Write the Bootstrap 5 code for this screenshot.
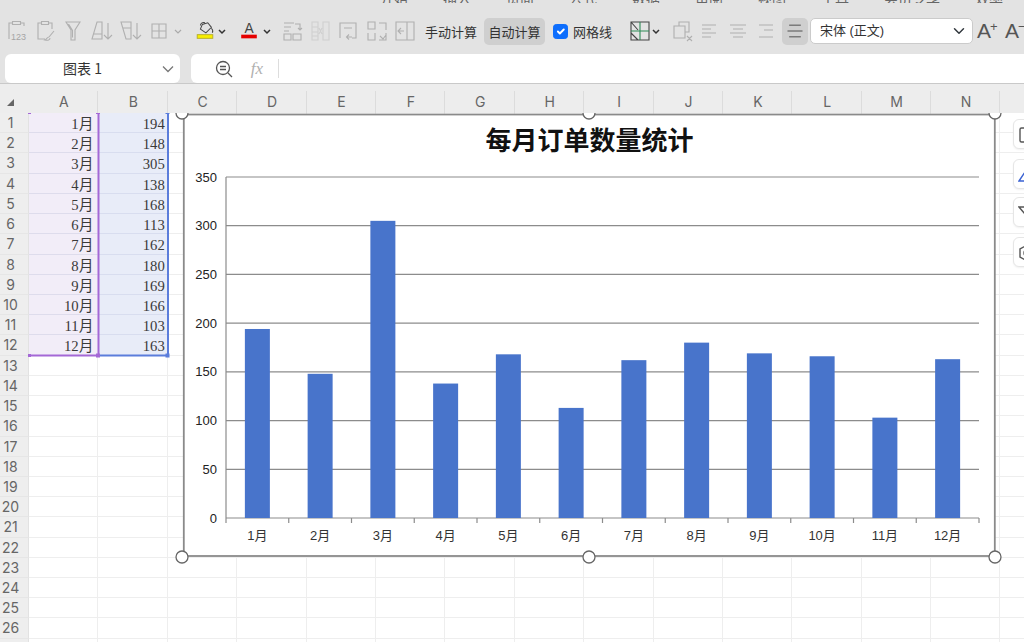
<!DOCTYPE html>
<html lang="zh">
<head>
<meta charset="utf-8">
<title>每月订单数量统计</title>
<link href="https://cdn.jsdelivr.net/npm/bootstrap@5.3.0/dist/css/bootstrap.min.css" rel="stylesheet">
<style>
html,body{height:100%;margin:0;overflow:hidden;background:#fff}
body{font-family:"Noto Sans CJK SC","Liberation Sans",sans-serif;font-size:13px;color:#333}
.app{width:1024px;height:642px;overflow:hidden;background:#e3e3e3}
.tabs-cut{height:3px;overflow:hidden;padding-left:380px;gap:35px;align-items:flex-end;font-size:14px;line-height:16px;color:#666;white-space:nowrap}
.tabs-cut span{flex:none;margin-bottom:-3px}
.tools{height:51px;padding:13px 0 8px 2px;flex-wrap:nowrap;overflow:hidden}
.tools>*{flex:none}
.ico{width:28.6px;height:30px;display:flex;align-items:center;justify-content:center}
.ico2{width:28.2px}.ico3{width:28px}
.ico svg{fill:none;stroke:#b0b0b0;stroke-width:1.1;width:24px;height:24px}
.ico .pale{stroke:#d0d0d0}
.ico-dark svg{stroke:#454545}
.w22{width:22px}.w24{width:24px}.w26{width:26px}
.caret{width:8px;height:30px}
.caret svg{width:8px;height:30px;fill:none;stroke:#333;stroke-width:1.5}
.caret.off svg{stroke:#aaa;stroke-width:1.2}
.m2{margin-left:2px}.m3{margin-left:3px}.m4{margin-left:4px}.m5{margin-left:5px}.m6{margin-left:6px}.m7{margin-left:7px}.m8{margin-left:8px}.m12{margin-left:12px}.m16{margin-left:16px}
.m12x{margin-left:12.4px}
.press{background:#cfcfcf;border-radius:5px}
.ico.press{height:27px}
.ico.press svg{width:20px;height:20px}
.cmd{line-height:27px;height:27px;font-size:13px;color:#333;white-space:nowrap}
.cmd-on{width:61px;text-align:center}
.grid-check{width:15px;height:15px;margin-top:0;margin-bottom:0;border-radius:4px;background-color:#1a6ef5;border-color:#1a6ef5;opacity:1}
.font-pick{width:163px;height:26px;min-height:26px;padding:0 24px 0 9px;font-size:13px;line-height:24px;border-radius:5px;border-color:#cbcbcb;color:#333;font-family:"Liberation Sans","Noto Sans CJK SC",sans-serif;background-position:right 5px center}
.grow-a{width:24px;font-family:"Liberation Sans",sans-serif;font-size:21px;font-weight:300;color:#555;line-height:30px;position:relative}
.grow-a sup{font-size:13px;top:-.55em;margin-left:-1px;vertical-align:baseline;position:relative}
.fbar{height:29px;padding-left:5px}
.name-box{width:175px;background:#fff;border-radius:6px;font-size:14px;color:#333;position:relative}
.name-text{width:155px;text-align:center}
.name-box svg{width:12px;height:8px;fill:none;stroke:#777;stroke-width:1.3;margin-left:2px}
.formula{margin-left:11px;flex:1;background:#fff;border-radius:6px 0 0 6px}
.formula svg{fill:none;stroke:#555;stroke-width:1.3}
.zoomer{margin-left:24px;width:18px;height:18px}
.fx{margin-left:12px;width:24px;font-family:"Liberation Serif",serif;font-style:italic;font-size:17px;color:#b0b0b0;text-align:center}
.fx-sep{width:1px;height:19px;background:#ddd;margin-left:9px}
.head-row{height:30px;border-top:1px solid #c9c9c9;background:#ededed;padding-top:7px;flex-wrap:nowrap;overflow:hidden;position:relative;z-index:3}
.corner{width:29px;flex:none}
.corner svg{width:7px;height:7px;fill:#666;margin:8px 0 0 7px;display:block}
.col-h{flex:none;width:69.4px;padding-left:1.5px;text-align:center;font-family:Inter,"Liberation Sans",sans-serif;font-size:14px;line-height:22px;color:#666;border-right:1px solid #dcdcdc}
.sheet{height:529px;overflow:hidden;position:relative;background:#fff}
.srow{display:flex;height:20.23px;flex-wrap:nowrap}
.rnum{flex:none;width:29px;padding-right:7px;background:#eeeeee;border-right:1px solid #e2e2e2;border-bottom:1px solid #e6e6e6;text-align:center;font-family:Inter,"Liberation Sans",sans-serif;font-size:14px;line-height:19px;color:#666}
.cellx{flex:none;width:69.4px;border-right:1.5px solid #eeeeee;border-bottom:1.5px solid #eeeeee;text-align:right;padding:1px 4px 0 0;font-family:"Liberation Serif","Noto Sans CJK SC",serif;font-size:14.7px;line-height:21px;color:#3a3a3a;white-space:nowrap}
.sel-a{background:#f2edf8;border-bottom-color:#dedcec;border-right-color:#f2edf8}
.sel-b{background:#e8ecf8;border-bottom-color:#d8ddef;border-right-color:#e8ecf8;padding-right:2px}
.over{position:absolute;left:0;top:0;width:1024px;height:529px}
.chart-title{font-family:"Liberation Serif","Noto Sans CJK SC",serif;font-size:26px;font-weight:700;fill:#111;text-anchor:middle}
.tick-y{font-family:"Liberation Sans",sans-serif;font-size:13px;fill:#222;text-anchor:end}
.tick-x{font-family:"Liberation Sans","Noto Sans CJK SC",sans-serif;font-size:13px;fill:#333;text-anchor:middle}
.float-btn{position:absolute;left:1012.5px;width:40px;height:30px;background:#fff;border:1px solid #e6e6e6;border-radius:6px;box-shadow:0 1px 2px rgba(0,0,0,.06)}
.float-btn svg{position:absolute;left:4px;top:6px;width:18px;height:18px;fill:none;stroke:#555;stroke-width:1.4}
.fb1{top:6px}.fb2{top:45.5px}.fb3{top:84px}.fb4{top:123.5px}
.fb2 svg{stroke:#3b63d3}
</style>
</head>
<body>
<div class="app d-flex flex-column">
  <div class="tabs-cut d-flex"><span>开始</span><span>插入</span><span>页面</span><span>公式</span><span>数据</span><span>审阅</span><span>视图</span><span>工具</span><span>会员专享</span><span>效率</span></div>

  <div class="tools d-flex align-items-center">
    <div class="ico"><svg viewBox="0 0 24 24"><path d="M8 4H5V20M17 4h3v3M8.500 2.500h8v3h-8z"/><text x="7" y="21" font-size="9" stroke="none" fill="#a5a5a5" font-family="Liberation Sans">123</text></svg></div>
    <div class="ico"><svg viewBox="0 0 24 24"><path d="M8 4H5v16h7M16 4h3v6M8.500 2.500h7v3h-7zM21 12l-5 6M16 18c-2 0-2 2-4 3 3 .5 5 0 5-2"/></svg></div>
    <div class="ico"><svg viewBox="0 0 24 24"><path d="M5 3h14l-5 8v10h-4V11zM7.500 5l4 6.500v7"/></svg></div>
    <div class="ico"><svg viewBox="0 0 24 24"><path d="M7 3h5v17H2zM4 15h8M18 4v16M14 16l4 4 4-4"/></svg></div>
    <div class="ico"><svg viewBox="0 0 24 24"><path d="M2 3h10v17H7zM4 9h8M18 4v16M14 16l4 4 4-4"/></svg></div>
    <div class="ico"><svg viewBox="0 0 24 24"><path d="M5 5h14v14H5zM12 5v14M5 12h14"/></svg></div>
    <div class="caret off"><svg viewBox="0 0 8 30"><path d="M1 14l3 3 3-3"/></svg></div>

    <div class="ico ico-dark w22 m12x"><svg viewBox="0 0 24 24"><path d="M9 5l6-2 4 5-6 6-6-4zM12 3c-3-1-5 1-5 3M19 9c2 2 2 3 1 5"/><rect x="3.500" y="16" width="17" height="4" fill="#f7ee00" stroke="#b5ad2a" stroke-width="1"/></svg></div>
    <div class="caret m2"><svg viewBox="0 0 8 30"><path d="M1 14l3 3 3-3"/></svg></div>
    <div class="ico ico-dark w22 m12"><svg viewBox="0 0 24 24"><text x="12" y="14.500" font-size="15" text-anchor="middle" stroke="none" fill="#444" font-family="Liberation Sans">A</text><rect x="3.500" y="16" width="17" height="4" fill="#e60000" stroke="none"/></svg></div>
    <div class="caret m3"><svg viewBox="0 0 8 30"><path d="M1 14l3 3 3-3"/></svg></div>

    <div class="ico ico2 m7"><svg viewBox="0 0 24 24"><path d="M4 4h10M4 8h7M4 12h5M15 5h5v6M18 9l2 2 2-2M4 15h7v6H4zM13 15h8v6h-8z"/></svg></div>
    <div class="ico ico2"><svg viewBox="0 0 24 24"><path class="pale" d="M4 3h6v18H4zM4 8h6M4 13h6M4 17h6M15 3h6v18h-6zM11 9l3 6M14 9l-3 6"/></svg></div>
    <div class="ico ico2"><svg viewBox="0 0 24 24"><path d="M4 19V4h16v15h-4M8 9h8M16 18h-5M13 15.500L10.500 18l2.500 2.500"/></svg></div>
    <div class="ico ico2"><svg viewBox="0 0 24 24"><path d="M3 3h7v7H3zM3 14v7h7v-7M14 4h7v7M21 14v7h-7M15 17l3 3 3-4"/></svg></div>
    <div class="ico ico2"><svg viewBox="0 0 24 24"><path d="M3 3h18v18H3zM14 3v18M11 12H5M8 9l-3 3 3 3"/></svg></div>

    <div class="cmd m6">手动计算</div>
    <div class="cmd cmd-on press m7">自动计算</div>
    <input class="form-check-input grid-check m8" type="checkbox" checked aria-label="网格线">
    <div class="cmd m5">网格线</div>

    <div class="ico ico-dark w24 m16"><svg viewBox="0 0 24 24"><path d="M3 3h18v18H3zM3 3l7 8M3 14l7 7"/><path d="M3 12h18M12 3v18" style="stroke:#2e8b57"/></svg></div>
    <div class="caret"><svg viewBox="0 0 8 30"><path d="M1 14l3 3 3-3"/></svg></div>
    <div class="ico ico3 m8"><svg viewBox="0 0 24 24"><path d="M9 7V3h10v10h-4M4 7h11v12H4zM17 17l5 5M22 17l-5 5"/></svg></div>
    <div class="ico ico3"><svg viewBox="0 0 24 24"><path d="M4 6h14M4 10h9M4 14h14M4 18h9"/></svg></div>
    <div class="ico ico3"><svg viewBox="0 0 24 24"><path d="M4 6h16M7 10h10M4 14h16M7 18h10"/></svg></div>
    <div class="ico ico3"><svg viewBox="0 0 24 24"><path d="M5 6h14M10 11h9M5 18h14"/></svg></div>
    <div class="ico ico3 ico-dark press m2 w26"><svg viewBox="0 0 24 24"><path d="M5 5h14M3 12h18M5 19h14"/></svg></div>
    <select class="form-select font-pick m2" aria-label="字体"><option>宋体 (正文)</option></select>
    <div class="grow-a m4">A<sup>+</sup></div>
    <div class="grow-a m4">A<sup>−</sup></div>
  </div>

  <div class="fbar d-flex">
    <div class="name-box d-flex align-items-center">
      <span class="name-text">图表 1</span>
      <svg viewBox="0 0 12 8"><path d="M1 1.500l5 5 5-5"/></svg>
    </div>
    <div class="formula d-flex align-items-center">
      <svg class="zoomer" viewBox="0 0 18 18"><circle cx="8" cy="8" r="6.500"/><path d="M5 6.500h6M5 9.500h6M13 13l4 4"/></svg>
      <span class="fx">fx</span>
      <span class="fx-sep"></span>
    </div>
  </div>

  <div class="head-row d-flex" id="heads"><div class="corner"><svg viewBox="0 0 7 7"><path d="M7 0v7H0z"/></svg></div></div>

  <div class="sheet">
    <div id="rows"></div>
    <svg class="over" id="chart" viewBox="0 113 1024 529" xmlns="http://www.w3.org/2000/svg"></svg>
    <div class="float-btn fb1"><svg viewBox="0 0 18 18"><rect x="2" y="2" width="6" height="14" rx="1.500"/><rect x="11" y="2" width="6" height="14" rx="1.500"/></svg></div>
    <div class="float-btn fb2"><svg viewBox="0 0 18 18"><path d="M1 15L9 3l8 12z"/></svg></div>
    <div class="float-btn fb3"><svg viewBox="0 0 18 18"><path d="M1 3h16l-6 7v6H7v-6z"/></svg></div>
    <div class="float-btn fb4"><svg viewBox="0 0 18 18"><path d="M9 1l7 4v8l-7 4-7-4V5z"/><circle cx="9" cy="9" r="3"/></svg></div>
  </div>
</div>

<script src="https://cdn.jsdelivr.net/npm/bootstrap@5.3.0/dist/js/bootstrap.bundle.min.js"></script>
<script>
const data=[194,148,305,138,168,113,162,180,169,166,103,163];
const letters="ABCDEFGHIJKLMNO".split("");
const heads=document.getElementById("heads");
letters.forEach(l=>{const d=document.createElement("div");d.className="col-h";d.textContent=l;heads.appendChild(d);});
const rows=document.getElementById("rows");
let h="";
for(let r=0;r<27;r++){
  h+='<div class="srow"><div class="rnum">'+(r+1)+'</div>';
  letters.forEach((l,c)=>{
    let cls="cellx",t="";
    if(r<12&&c===0){cls+=" sel-a";t=(r+1)+"月";}
    if(r<12&&c===1){cls+=" sel-b";t=data[r];}
    h+='<div class="'+cls+'">'+t+'</div>';
  });
  h+='</div>';
}
rows.innerHTML=h;
const x0=226,x1=979,y0=518,yTop=177,step=(x1-x0)/12,k=(y0-yTop)/350;
let s='';
s+='<path d="M29 355.500H98M98.500 113V355" stroke="#a468d6" stroke-width="2" fill="none"/>';
s+='<path d="M100 355.500H168M168 113V355" stroke="#5b7ddb" stroke-width="2" fill="none"/>';
s+='<rect x="28" y="354" width="3" height="3" fill="#a468d6"/><rect x="96" y="353.500" width="4" height="4" fill="#a468d6"/><rect x="165.500" y="353.500" width="4" height="4" fill="#5b7ddb"/>';
s+='<rect x="28" y="112" width="3" height="2" fill="#a468d6"/><rect x="96" y="112" width="4" height="2" fill="#a468d6"/><rect x="165.500" y="112" width="4" height="2" fill="#5b7ddb"/>';
s+='<rect x="183.800" y="114.500" width="811" height="441.500" fill="#fff" stroke="#8a8a8a" stroke-width="1.800"/>';
s+='<text class="chart-title" x="589.500" y="150">每月订单数量统计</text>';
for(let v=0;v<=350;v+=50){const y=y0-v*k;
  s+='<line x1="'+x0+'" x2="'+x1+'" y1="'+y+'" y2="'+y+'" stroke="#8c8c8c" stroke-width="1.200"/>';
  s+='<text class="tick-y" x="217" y="'+(y+4.500)+'">'+v+'</text>';
}
s+='<line x1="'+x0+'" x2="'+x0+'" y1="'+yTop+'" y2="'+y0+'" stroke="#8c8c8c" stroke-width="1.200"/>';
data.forEach((v,i)=>{
  const cx=x0+step*(i+.5);
  s+='<rect x="'+(cx-12.500)+'" y="'+(y0-v*k)+'" width="25" height="'+(v*k)+'" fill="#4874cb"/>';
  s+='<text class="tick-x" x="'+cx+'" y="540">'+(i+1)+'月</text>';
});
for(let i=0;i<=12;i++){const x=x0+step*i;s+='<line x1="'+x+'" x2="'+x+'" y1="'+y0+'" y2="523" stroke="#8c8c8c" stroke-width="1.200"/>';}
[[182,113],[589,113],[995,113],[182,557],[589,557],[995,557]].forEach(p=>{
  s+='<circle cx="'+p[0]+'" cy="'+p[1]+'" r="6" fill="#fff" stroke="#666" stroke-width="1.300"/>';
});
document.getElementById("chart").innerHTML=s;
</script>
</body>
</html>
